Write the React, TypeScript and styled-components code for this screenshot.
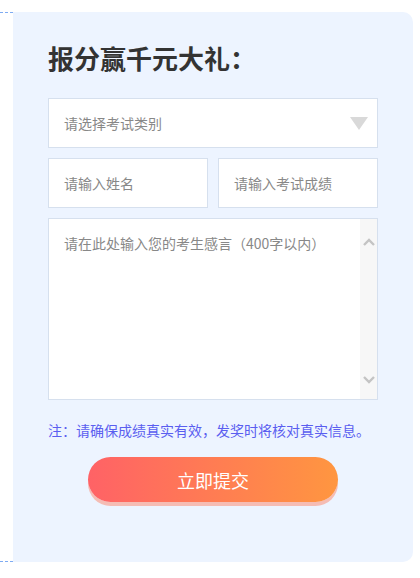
import React from "react";
import styled, { createGlobalStyle } from "styled-components";

const GlobalStyle = createGlobalStyle`
  body {
    margin: 0;
    background: #fff;
    font-family: "Noto Sans CJK SC", "Noto Sans", sans-serif;
  }
`;

const App: React.FC = () => {
  return (
    <Page>
      <GlobalStyle />
      <Card>
        <Title>报分赢千元大礼：</Title>
        <Form>
          <Field>
            <Placeholder>请选择考试类别</Placeholder>
            <Arrow />
          </Field>
          <Row>
            <Field>
              <Placeholder>请输入姓名</Placeholder>
            </Field>
            <Field>
              <Placeholder>请输入考试成绩</Placeholder>
            </Field>
          </Row>
          <TextBox>
            <TextPlaceholder>请在此处输入您的考生感言（400字以内）</TextPlaceholder>
            <ScrollBar>
              <svg width="12" height="8" viewBox="0 0 12 8">
                <path d="M1 7 L6 2 L11 7" fill="none" stroke="#c4c4c4" strokeWidth="2.4" />
              </svg>
              <svg width="12" height="8" viewBox="0 0 12 8">
                <path d="M1 1 L6 6 L11 1" fill="none" stroke="#c4c4c4" strokeWidth="2.4" />
              </svg>
            </ScrollBar>
          </TextBox>
        </Form>
        <Note>注：请确保成绩真实有效，发奖时将核对真实信息。</Note>
        <SubmitButton>立即提交</SubmitButton>
      </Card>
    </Page>
  );
};

export default App;

const Page = styled.div`
  padding-top: 12px;
  width: 420px;
  height: 578px;
  box-sizing: border-box;
`;

const Card = styled.div`
  position: relative;
  margin-left: 13px;
  width: 400px;
  height: 550px;
  box-sizing: border-box;
  padding: 28px 35px 0;
  background: #edf4ff;
  border-radius: 0 10px 10px 0;

  &::before,
  &::after {
    content: "";
    position: absolute;
    left: -13px;
    width: 13px;
    border-top: 1px dashed #7eabf2;
  }
  &::before {
    top: 0;
  }
  &::after {
    bottom: 0;
  }
`;

const Title = styled.h1`
  margin: 0;
  font-size: 26px;
  line-height: 36px;
  font-weight: 700;
  color: #333;
`;

const Form = styled.div`
  margin-top: 22px;
  display: flex;
  flex-direction: column;
  gap: 10px;
`;

const Row = styled.div`
  display: grid;
  grid-template-columns: 1fr 1fr;
  gap: 10px;
`;

const Field = styled.div`
  height: 50px;
  box-sizing: border-box;
  background: #fff;
  border: 1px solid #d6e0ee;
  display: flex;
  align-items: center;
  justify-content: space-between;
  padding: 0 9px 0 15px;
`;

const Placeholder = styled.span`
  font-size: 14px;
  color: #888;
`;

const Arrow = styled.span`
  width: 0;
  height: 0;
  border-left: 9px solid transparent;
  border-right: 9px solid transparent;
  border-top: 13px solid #d9d9d9;
`;

const TextBox = styled.div`
  height: 182px;
  box-sizing: border-box;
  background: #fff;
  border: 1px solid #d6e0ee;
  display: flex;
`;

const TextPlaceholder = styled.div`
  flex: 1;
  padding: 14px 15px;
  font-size: 14px;
  line-height: 20px;
  color: #888;
`;

const ScrollBar = styled.div`
  width: 17px;
  background: #f7f7f7;
  display: flex;
  flex-direction: column;
  justify-content: space-between;
  align-items: center;
  padding: 19px 0 15px;
`;

const Note = styled.p`
  margin: 20px 0 0;
  font-size: 14px;
  line-height: 20px;
  color: #5a5ef0;
`;

const SubmitButton = styled.button`
  display: block;
  margin: 17px auto 0;
  width: 250px;
  height: 45px;
  border: none;
  border-radius: 23px;
  background: linear-gradient(90deg, #ff6266, #ff9640);
  box-shadow: 0 4px 0 #f5bcb4;
  color: #fff;
  font-family: "Noto Sans CJK SC", sans-serif;
  font-size: 18px;
  cursor: pointer;
`;
